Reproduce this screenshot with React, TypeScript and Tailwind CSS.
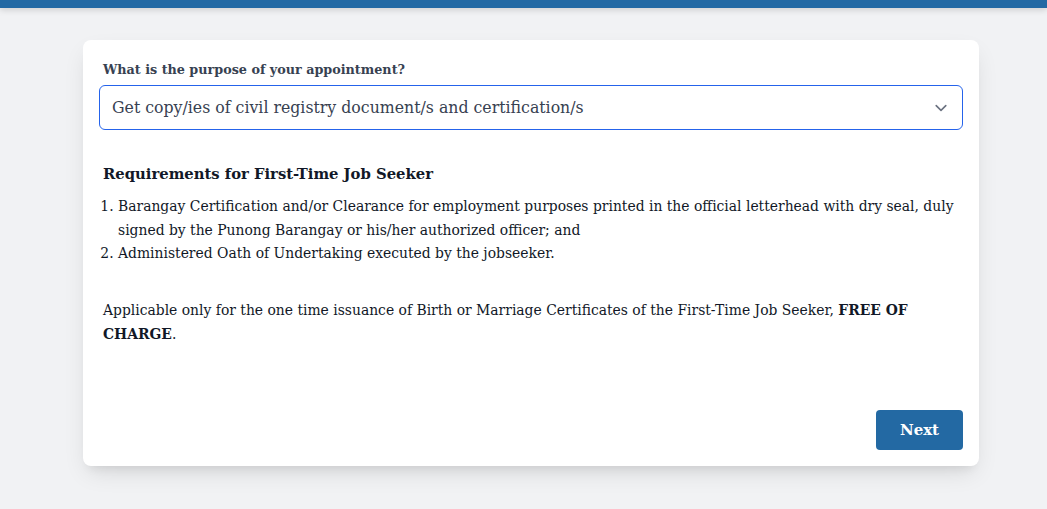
import React from "react";

const serif = { fontFamily: '"DejaVu Serif", Georgia, serif' };

export default function App() {
  return (
    <div className="min-h-[509px] bg-[#f1f2f4] font-['DejaVu_Serif',serif]">
      <div className="h-2 bg-[#2269a4] shadow-[0_2px_6px_rgba(0,0,0,0.15)]" />
      <div className="pl-[83px] pt-8 pb-10">
        <div className="w-[896px] min-h-[426px] flex flex-col rounded-lg bg-white px-4 pt-5 pb-4 shadow-[0_10px_25px_-5px_rgba(0,0,0,0.12),0_8px_10px_-6px_rgba(0,0,0,0.08)]">
          <label className="block pl-1 text-[12.75px] font-bold leading-5 text-[#374151] mb-[5px]">
            What is the purpose of your appointment?
          </label>
          <div className="relative">
            <select
              className="w-full h-[45px] appearance-none rounded-md border border-[#2563eb] bg-white pl-3 pr-10 text-[15.75px] text-[#374151] outline-none"
              style={serif}
              defaultValue="civil"
            >
              <option value="civil">Get copy/ies of civil registry document/s and certification/s</option>
            </select>
            <svg
              className="pointer-events-none absolute right-[14px] top-[15px] h-4 w-4 text-[#6b7280]"
              viewBox="0 0 20 20"
              fill="none"
              stroke="currentColor"
              strokeWidth="2"
            >
              <path strokeLinecap="round" strokeLinejoin="round" d="M4 7l6 6 6-6" />
            </svg>
          </div>

          <div className="pl-1 text-[#111827]">
            <h3 className="mt-8 text-[14.8px] font-bold leading-6 text-[#111827]">
              Requirements for First-Time Job Seeker
            </h3>
            <ol className="mt-[9px] list-decimal pl-[15px] text-[13.9px] leading-[23.5px]">
              <li>
                Barangay Certification and/or Clearance for employment purposes printed in the official letterhead
                with dry seal, duly signed by the Punong Barangay or his/her authorized officer; and
              </li>
              <li>Administered Oath of Undertaking executed by the jobseeker.</li>
            </ol>
            <p className="mt-8 text-[13.9px] leading-6">
              Applicable only for the one time issuance of Birth or Marriage Certificates of the First-Time Job Seeker,{" "}
              <strong>FREE OF CHARGE</strong>.
            </p>
          </div>

          <div className="mt-auto flex justify-end pt-4">
            <button className="h-[40px] w-[87px] rounded-[4px] bg-[#2369a3] text-[15px] font-bold text-white">
              Next
            </button>
          </div>
        </div>
      </div>
    </div>
  );
}
